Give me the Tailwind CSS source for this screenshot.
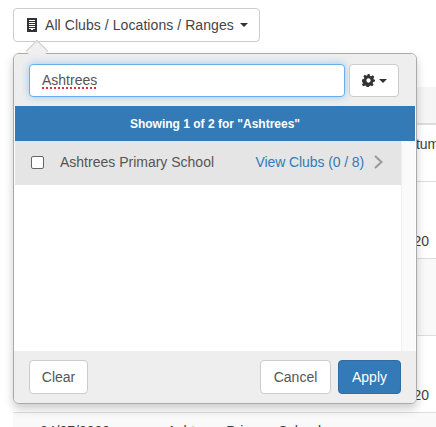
<!DOCTYPE html>
<html>
<head>
<meta charset="utf-8">
<script src="https://cdn.jsdelivr.net/npm/@tailwindcss/browser@4"></script>
</head>
<body class="bg-white font-['Liberation_Sans',Arial,sans-serif] text-[14px] text-[#3c3c3c]">
<div class="relative h-[427px] w-[436px] overflow-hidden">
  <div class="pl-[13px] pt-[8px]">
    <button class="flex h-[34px] w-[247px] items-center rounded-[4px] border border-[#ccc] bg-white pl-[12px] text-[14px] text-[#444]">
      <svg class="h-[14px] w-[12px] shrink-0" viewBox="0 0 12 14"><path fill="#333" fill-rule="evenodd" d="M1 0h10v14H1zM3 2v1h6V2zM3 4v1h6V4zM3 6v1h6V6zM3 8v1h6V8zM3 10v1h2v1h2v-1h2v-1z"/></svg>
      <span class="ml-[7px] tracking-[0.07px]">All Clubs / Locations / Ranges</span>
      <span class="ml-[6px] h-0 w-0 border-x-[4px] border-t-[4px] border-x-transparent border-t-[#333]"></span>
    </button>

    <div class="mt-[45px] w-[423px]">
      <div class="h-[36px] bg-[#f5f5f5]"></div>
      <div class="h-[58px] whitespace-nowrap border-t-2 border-[#ddd] pl-[385px] leading-[38px]">Datum</div>
      <div class="h-[77px] border-t border-[#ddd] pl-[385px] pt-[49px] leading-[20px]">2020</div>
      <div class="h-[77px] border-t border-[#ddd] bg-[#f9f9f9]"></div>
      <div class="h-[77px] border-t border-[#ddd] pl-[385px] pt-[49px] leading-[20px]">2020</div>
      <div class="flex h-[40px] border-t border-[#ddd] bg-[#f9f9f9] pl-[27px] pt-[8px] leading-[20px]"><span>24/07/2020</span><span class="ml-[57px]">Ashtrees Primary School</span></div>
    </div>
  </div>

  <div class="absolute left-[13px] top-[53px] flex h-[351px] w-[404px] flex-col rounded-[6px] border border-[#aaa] bg-white shadow-[0_5px_10px_rgba(0,0,0,0.2)]">
    <span class="absolute left-[15px] top-[-11px] h-[16px] w-[16px] rotate-45 border-l border-t border-[#ccc] bg-[#f0f0f0]"></span>
    <div class="relative flex h-[52px] items-start gap-[4px] rounded-t-[5px] bg-[#eee] px-[15px] pt-[10px]">
      <div class="flex h-[33px] w-[316px] items-center rounded-[4px] border border-[#66afe9] bg-white pl-[12px] text-[14px] text-[#555] shadow-[0_0_8px_rgba(102,175,233,0.6)]">
        <span class="underline decoration-[#d33] decoration-dotted decoration-2 underline-offset-2">Ashtrees</span>
      </div>
      <button class="flex h-[33px] w-[50px] items-center justify-center gap-[4px] rounded-[4px] border border-[#ccc] bg-white">
        <svg class="h-[13px] w-[13px]" viewBox="0 0 24 24"><path fill="#333" fill-rule="evenodd" d="M10 0h4l.7 3.300 2.400 1 2.900-1.800 2.800 2.800-1.800 2.900 1 2.400L24 10v4l-3.300.7-1 2.400 1.800 2.900-2.800 2.800-2.900-1.800-2.400 1-.7 3.300h-4l-.7-3.300-2.400-1-2.900 1.800-2.800-2.800 1.800-2.900-1-2.400L0 14v-4l3.300-.7 1-2.400-1.800-2.900 2.800-2.800 2.900 1.800 2.400-1zM12 8a4 4 0 1 0 0 8 4 4 0 0 0 0-8z"/></svg>
        <span class="h-0 w-0 border-x-[4px] border-t-[4px] border-x-transparent border-t-[#333]"></span>
      </button>
    </div>
    <div class="mx-[1px] flex h-[35px] items-center justify-center bg-[#337ab7] text-[12px] font-bold text-white">Showing 1 of 2 for "Ashtrees"</div>
    <div class="flex min-h-0 flex-1">
      <div class="flex-1 pl-[1px]">
        <div class="flex h-[44px] items-center bg-[#e5e5e5] pb-[2px] pl-[16px] pr-[18px]">
          <span class="h-[13px] w-[13px] rounded-[2px] border border-[#666] bg-white"></span>
          <span class="ml-[16px] text-[14px] text-[#555]">Ashtrees Primary School</span>
          <span class="ml-auto tracking-[-0.1px] text-[#337ab7]">View Clubs (0 / 8)</span>
          <svg class="ml-[10px] h-[14px] w-[9px]" viewBox="0 0 9 14"><path fill="none" stroke="#999" stroke-width="2" d="M1 1l6.500 6-6.500 6"/></svg>
        </div>
      </div>
      <div class="mr-[1px] w-[14px] border-l border-[#f0f0f0] bg-[#fafafa]"></div>
    </div>
    <div class="flex h-[52px] items-start rounded-b-[5px] bg-[#eee] px-[15px] pt-[9px]">
      <button class="h-[34px] w-[59px] rounded-[4px] border border-[#ccc] bg-white text-[#555]">Clear</button>
      <button class="ml-auto h-[34px] w-[71px] rounded-[4px] border border-[#ccc] bg-white text-[#555]">Cancel</button>
      <button class="ml-[7px] h-[34px] w-[63px] rounded-[4px] border border-[#2e6da4] bg-[#337ab7] text-white">Apply</button>
    </div>
  </div>
</div>
</body>
</html>
